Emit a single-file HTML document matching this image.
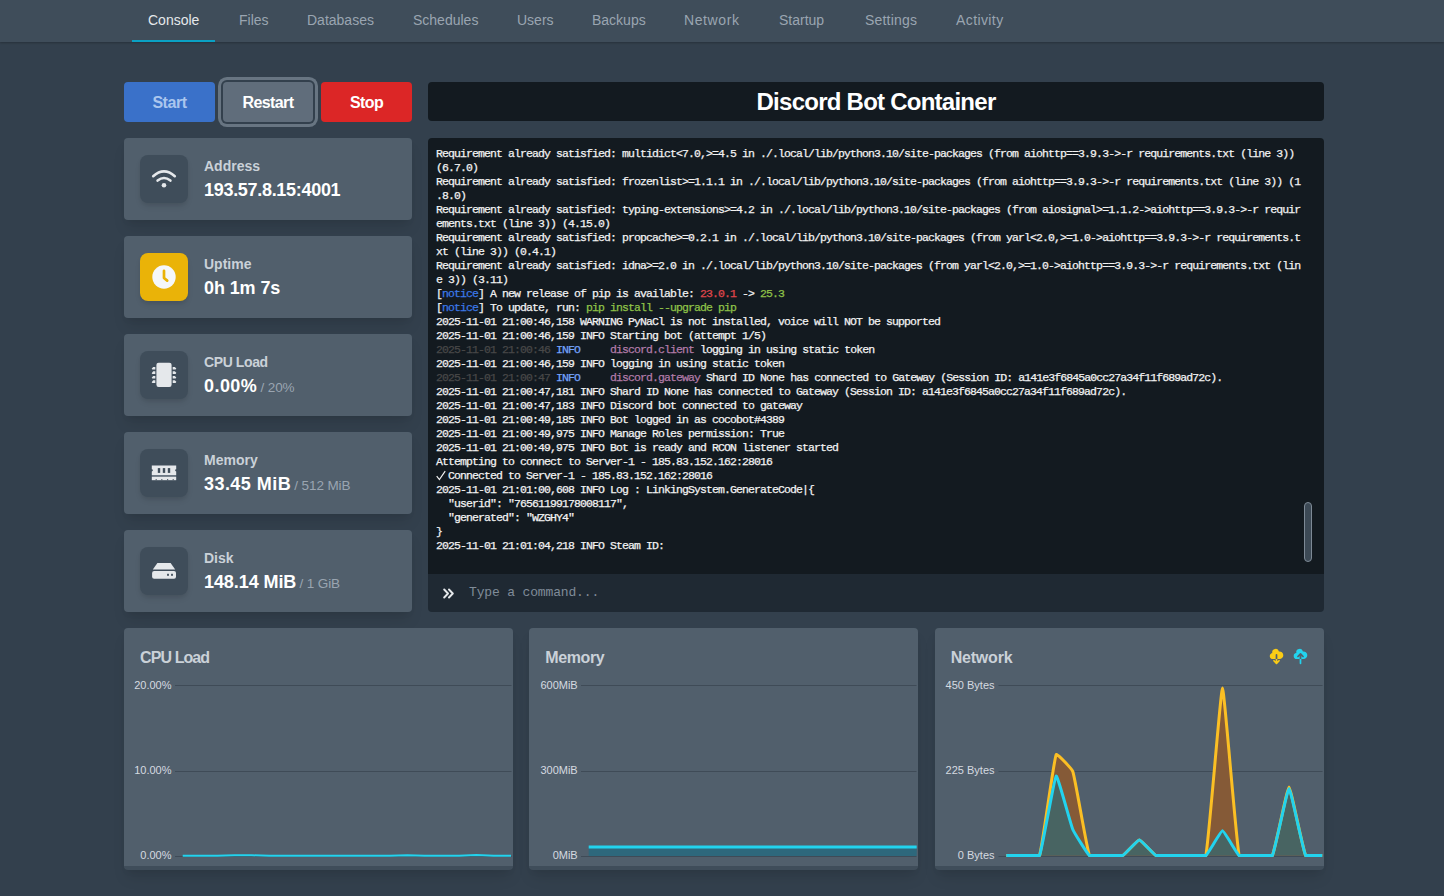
<!DOCTYPE html>
<html><head><meta charset="utf-8">
<style>
*{box-sizing:border-box;margin:0;padding:0}
html,body{width:1444px;height:896px;overflow:hidden;background:#33404d;font-family:"Liberation Sans",sans-serif}
.abs{position:absolute}
#nav{position:absolute;left:0;top:0;width:1444px;height:42px;background:#3f4d5a;box-shadow:0 1px 2px rgba(0,0,0,.25)}
#nav a{position:absolute;top:12px;font-size:14px;line-height:17px;color:#9aa5b1;text-decoration:none;white-space:nowrap}
#nav a.act{color:#e5e8eb}
#uline{position:absolute;left:132px;top:40px;width:83px;height:2px;background:#0aa1c4}
.btn{position:absolute;top:82px;height:40px;width:91px;border-radius:4px;font-size:16px;font-weight:700;text-align:center;line-height:41px;color:#fff;letter-spacing:-0.6px}
.card{position:absolute;left:124px;width:288px;height:82px;background:#515f6c;border-radius:4px;box-shadow:0 10px 15px -3px rgba(0,0,0,.1),0 4px 6px -2px rgba(0,0,0,.05)}
.ibox{position:absolute;left:16px;top:17px;width:48px;height:48px;border-radius:8px;background:#3f4d5a;box-shadow:0 4px 6px -1px rgba(0,0,0,.1),0 2px 4px -1px rgba(0,0,0,.06)}
.ibox svg{position:absolute;left:0;top:0}
.lbl{position:absolute;left:80px;top:19.5px;font-size:14px;font-weight:700;color:#cad1d8;white-space:nowrap;line-height:17px}
.val{position:absolute;left:80px;top:41px;letter-spacing:-0.3px;font-size:18px;font-weight:700;color:#fff;white-space:nowrap;line-height:22px}
.val small{font-size:13.5px;font-weight:400;color:#9aa5b1;letter-spacing:-0.1px;margin-left:-1.5px}
#title{position:absolute;left:428px;top:82px;width:896px;height:39px;background:#131a20;border-radius:4px;color:#fff;font-size:24px;font-weight:700;text-align:center;line-height:39px;letter-spacing:-0.75px}
#con{position:absolute;left:428px;top:138px;width:896px;height:436px;background:#131a20;border-radius:4px 4px 0 0}
#out{position:absolute;left:8px;top:9px;font-family:"Liberation Mono",monospace;font-size:11.5px;line-height:14px;letter-spacing:-0.9px;color:#f2f2f2;white-space:pre;-webkit-text-stroke:0.25px currentColor}
.cB{color:#3b78e7}.cR{color:#e0474c}.cG{color:#8fc348}.cD{color:#484848}.cI{color:#73a3fa}.cM{color:#b27ba8}
#inp{position:absolute;left:428px;top:574px;width:896px;height:38px;background:#1f2933;border-radius:0 0 4px 4px}
.chart{position:absolute;top:628px;width:389px;height:242px;background:#515f6c;border-radius:4px;border-bottom:4px solid #3f4d5a;box-shadow:0 10px 15px -3px rgba(0,0,0,.1),0 4px 6px -2px rgba(0,0,0,.05)}
.ctitle{position:absolute;left:16px;top:21px;font-size:16px;font-weight:700;color:#cad1d8;white-space:nowrap}
.chart svg{position:absolute;left:0;top:0}
</style></head><body>
<div id="nav">
<a class="act" style="left:148px">Console</a>
<a style="left:239px">Files</a>
<a style="left:307px">Databases</a>
<a style="left:413px">Schedules</a>
<a style="left:517px">Users</a>
<a style="left:592px">Backups</a>
<a style="left:684px;letter-spacing:.6px">Network</a>
<a style="left:779px">Startup</a>
<a style="left:865px;letter-spacing:.2px">Settings</a>
<a style="left:956px;letter-spacing:.4px">Activity</a>
<div id="uline"></div>
</div>

<div class="btn" style="left:124px;background:#3a71c9;color:#aac6ee;letter-spacing:-0.45px">Start</div>
<div class="btn" style="left:222.67px;width:90.67px;background:#606d7b;box-shadow:0 0 0 2px #33404d,0 0 0 5px #687582">Restart</div>
<div class="btn" style="left:321px;background:#dc2626">Stop</div>

<div class="card" style="top:138px"><div class="ibox"><svg width="48" height="48" viewBox="0 0 48 48"><path d="M13.2 21.2 Q24 11.6 34.8 21.2" fill="none" stroke="#e5e8eb" stroke-width="2.6" stroke-linecap="round"/><path d="M17.6 25.6 Q24 20.4 30.4 25.6" fill="none" stroke="#e5e8eb" stroke-width="2.6" stroke-linecap="round"/><circle cx="24" cy="30.2" r="2.3" fill="#e5e8eb"/></svg></div><div class="lbl">Address</div><div class="val">193.57.8.15:4001</div></div>
<div class="card" style="top:236px"><div class="ibox" style="background:#eab308"><svg width="48" height="48" viewBox="0 0 48 48"><circle cx="24" cy="24" r="11.7" fill="#f5f7fa"/><path d="M24 17.8 V25 L27.2 27.6" fill="none" stroke="#eab308" stroke-width="2.7" stroke-linecap="round" stroke-linejoin="round"/></svg></div><div class="lbl">Uptime</div><div class="val" style="letter-spacing:-0.1px">0h 1m 7s</div></div>
<div class="card" style="top:334px"><div class="ibox"><svg width="48" height="48" viewBox="0 0 48 48"><rect x="16.4" y="11.8" width="15.2" height="24.2" rx="2.2" fill="#e5e8eb"/><path d="M15.3 15.90 V18.50 H12.4 L11.7 17.80 L13.2 15.90z" fill="#e5e8eb"/><path d="M32.7 15.90 V18.50 H35.6 L36.3 17.40 L34.8 15.90z" fill="#e5e8eb"/><path d="M15.3 20.30 V22.90 H12.4 L11.7 22.20 L13.2 20.30z" fill="#e5e8eb"/><path d="M32.7 20.30 V22.90 H35.6 L36.3 21.80 L34.8 20.30z" fill="#e5e8eb"/><path d="M15.3 24.90 V27.50 H12.4 L11.7 26.80 L13.2 24.90z" fill="#e5e8eb"/><path d="M32.7 24.90 V27.50 H35.6 L36.3 26.40 L34.8 24.90z" fill="#e5e8eb"/><path d="M15.3 29.30 V31.90 H12.4 L11.7 31.20 L13.2 29.30z" fill="#e5e8eb"/><path d="M32.7 29.30 V31.90 H35.6 L36.3 30.80 L34.8 29.30z" fill="#e5e8eb"/></svg></div><div class="lbl" style="letter-spacing:-0.4px">CPU Load</div><div class="val"><span style="letter-spacing:0.45px">0.00%</span> <small>/ 20%</small></div></div>
<div class="card" style="top:432px"><div class="ibox"><svg width="48" height="48" viewBox="0 0 48 48"><path d="M11.8 16.4 H36.2 V20.2 a1 1 0 0 0 0 2.2 V26 H11.8 V22.4 a1 1 0 0 0 0 -2.2z" fill="#e5e8eb"/><rect x="17.8" y="19.1" width="2.4" height="4.8" fill="#3f4d5a"/><rect x="22.8" y="19.1" width="2.4" height="4.8" fill="#3f4d5a"/><rect x="27.8" y="19.1" width="2.4" height="4.8" fill="#3f4d5a"/><rect x="11.8" y="26" width="24.4" height="1.8" fill="#6b7784"/><path d="M11.8 27.8 H36.2 V31.2 H11.8z" fill="#e5e8eb"/><rect x="15.6" y="30.2" width="1.2" height="1" fill="#3f4d5a"/><rect x="21.2" y="30.2" width="1.2" height="1" fill="#3f4d5a"/><rect x="27" y="30.2" width="1.2" height="1" fill="#3f4d5a"/><rect x="32.6" y="30.2" width="1.2" height="1" fill="#3f4d5a"/></svg></div><div class="lbl">Memory</div><div class="val"><span style="letter-spacing:0.45px">33.45 MiB</span> <small>/ 512 MiB</small></div></div>
<div class="card" style="top:530px"><div class="ibox"><svg width="48" height="48" viewBox="0 0 48 48"><path d="M17.4 16.1 H30.6 L35.2 22.6 H12.8z" fill="#e5e8eb"/><rect x="12.1" y="24.1" width="23.9" height="7.7" rx="2" fill="#e5e8eb"/><rect x="27" y="26.8" width="2" height="2" rx=".4" fill="#3f4d5a"/><rect x="31" y="26.8" width="2" height="2" rx=".4" fill="#3f4d5a"/></svg></div><div class="lbl">Disk</div><div class="val"><span style="letter-spacing:-0.08px">148.14 MiB</span> <small>/ 1 GiB</small></div></div>

<div id="title">Discord Bot Container</div>
<div id="con"><div id="out">Requirement already satisfied: multidict&lt;7.0,&gt;=4.5 in ./.local/lib/python3.10/site-packages (from aiohttp==3.9.3-&gt;-r requirements.txt (line 3))
(6.7.0)
Requirement already satisfied: frozenlist&gt;=1.1.1 in ./.local/lib/python3.10/site-packages (from aiohttp==3.9.3-&gt;-r requirements.txt (line 3)) (1
.8.0)
Requirement already satisfied: typing-extensions&gt;=4.2 in ./.local/lib/python3.10/site-packages (from aiosignal&gt;=1.1.2-&gt;aiohttp==3.9.3-&gt;-r requir
ements.txt (line 3)) (4.15.0)
Requirement already satisfied: propcache&gt;=0.2.1 in ./.local/lib/python3.10/site-packages (from yarl&lt;2.0,&gt;=1.0-&gt;aiohttp==3.9.3-&gt;-r requirements.t
xt (line 3)) (0.4.1)
Requirement already satisfied: idna&gt;=2.0 in ./.local/lib/python3.10/site-packages (from yarl&lt;2.0,&gt;=1.0-&gt;aiohttp==3.9.3-&gt;-r requirements.txt (lin
e 3)) (3.11)
[<span class="cB">notice</span>] A new release of pip is available: <span class="cR">23.0.1</span> -&gt; <span class="cG">25.3</span>
[<span class="cB">notice</span>] To update, run: <span class="cG">pip install --upgrade pip</span>
2025-11-01 21:00:46,158 WARNING PyNaCl is not installed, voice will NOT be supported
2025-11-01 21:00:46,159 INFO Starting bot (attempt 1/5)
<span class="cD">2025-11-01 21:00:46</span> <span class="cI">INFO</span>     <span class="cM">discord.client</span> logging in using static token
2025-11-01 21:00:46,159 INFO logging in using static token
<span class="cD">2025-11-01 21:00:47</span> <span class="cI">INFO</span>     <span class="cM">discord.gateway</span> Shard ID None has connected to Gateway (Session ID: a141e3f6845a0cc27a34f11f689ad72c).
2025-11-01 21:00:47,181 INFO Shard ID None has connected to Gateway (Session ID: a141e3f6845a0cc27a34f11f689ad72c).
2025-11-01 21:00:47,183 INFO Discord bot connected to gateway
2025-11-01 21:00:49,185 INFO Bot logged in as cocobot#4389
2025-11-01 21:00:49,975 INFO Manage Roles permission: True
2025-11-01 21:00:49,975 INFO Bot is ready and RCON listener started
Attempting to connect to Server-1 - 185.83.152.162:28016
<span style="display:inline-block;width:6px;height:10px;position:relative"><svg style="position:absolute;left:0;top:0.5px" width="11" height="11" viewBox="0 0 11 11"><path d="M0.7 6.2 L3.4 9.6 L9.2 1.2" fill="none" stroke="#f2f2f2" stroke-width="1.2"/></svg></span> Connected to Server-1 - 185.83.152.162:28016
2025-11-01 21:01:00,608 INFO Log : LinkingSystem.GenerateCode|{
  "userid": "76561199178008117",
  "generated": "WZGHY4"
}
2025-11-01 21:01:04,218 INFO Steam ID:</div></div>
<div style="position:absolute;left:1303.8px;top:501.8px;width:8.2px;height:60px;border-radius:4px;background:#3c4955;border:1px solid #7d8995"></div>
<div id="inp"><svg style="position:absolute;left:15px;top:13.5px" width="12" height="12" viewBox="0 0 12 12"><path d="M1.2 1.5 L5 5.5 L1.2 9.5 M6 1.5 L9.8 5.5 L6 9.5" fill="none" stroke="#e5e8eb" stroke-width="1.9" stroke-linecap="round" stroke-linejoin="round"/></svg><div style="position:absolute;left:41px;top:11px;font-family:'Liberation Mono',monospace;font-size:13px;line-height:16px;color:#808c99;letter-spacing:-0.15px;white-space:pre">Type a command...</div></div>

<div class="chart" style="left:124px"><div class="ctitle" style="letter-spacing:-0.9px">CPU Load</div><svg width="389" height="238" viewBox="0 0 389 238"><line x1="51" y1="57.5" x2="387.5" y2="57.5" stroke="#3f4b57" stroke-width="1"/><line x1="51" y1="143.5" x2="387.5" y2="143.5" stroke="#3f4b57" stroke-width="1"/><line x1="51" y1="228.5" x2="387.5" y2="228.5" stroke="#3f4b57" stroke-width="1"/><text x="47.5" y="60.5" text-anchor="end" font-family="Liberation Sans" font-size="11" fill="#d5dae0">20.00%</text><text x="47.5" y="146" text-anchor="end" font-family="Liberation Sans" font-size="11" fill="#d5dae0">10.00%</text><text x="47.5" y="231" text-anchor="end" font-family="Liberation Sans" font-size="11" fill="#d5dae0">0.00%</text><path d="M58.7 227.8 L76.0 227.8 L93.3 227.8 L110.5 227.3 L127.8 227.3 L145.1 227.8 L162.4 227.8 L179.7 227.8 L196.9 227.8 L214.2 227.8 L231.5 227.8 L248.8 227.8 L266.0 227.8 L283.3 227.2 L300.6 227.8 L317.9 227.8 L335.2 227.8 L352.4 226.9 L369.7 227.8 L387.0 227.8" fill="none" stroke="#22d3ee" stroke-width="2"/></svg></div>
<div class="chart" style="left:529.33px"><div class="ctitle" style="letter-spacing:-0.4px">Memory</div><svg width="389" height="238" viewBox="0 0 389 238"><line x1="52" y1="57.5" x2="387.5" y2="57.5" stroke="#3f4b57" stroke-width="1"/><line x1="52" y1="143.5" x2="387.5" y2="143.5" stroke="#3f4b57" stroke-width="1"/><line x1="52" y1="228.5" x2="387.5" y2="228.5" stroke="#3f4b57" stroke-width="1"/><text x="48.7" y="60.5" text-anchor="end" font-family="Liberation Sans" font-size="11" fill="#d5dae0">600MiB</text><text x="48.7" y="146" text-anchor="end" font-family="Liberation Sans" font-size="11" fill="#d5dae0">300MiB</text><text x="48.7" y="231" text-anchor="end" font-family="Liberation Sans" font-size="11" fill="#d5dae0">0MiB</text><rect x="59.7" y="219" width="328" height="9" fill="#2e687c"/><path d="M59.7 219 H387.7" stroke="#22d3ee" stroke-width="3.2"/></svg></div>
<div class="chart" style="left:934.67px"><div class="ctitle" style="letter-spacing:-0.2px">Network</div><svg width="389" height="238" viewBox="0 0 389 238"><line x1="63.5" y1="57.5" x2="387.5" y2="57.5" stroke="#3f4b57" stroke-width="1"/><line x1="63.5" y1="143.5" x2="387.5" y2="143.5" stroke="#3f4b57" stroke-width="1"/><line x1="63.5" y1="228.5" x2="387.5" y2="228.5" stroke="#3f4b57" stroke-width="1"/><text x="59.5" y="60.5" text-anchor="end" font-family="Liberation Sans" font-size="11" fill="#d5dae0">450 Bytes</text><text x="59.5" y="146" text-anchor="end" font-family="Liberation Sans" font-size="11" fill="#d5dae0">225 Bytes</text><text x="59.5" y="231" text-anchor="end" font-family="Liberation Sans" font-size="11" fill="#d5dae0">0 Bytes</text><path d="M71.30 227.50 C72.96 227.50 86.27 227.50 87.93 227.50 C89.59 227.50 104.10 227.50 104.56 227.50 C107.42 218.81 118.49 133.32 121.19 126.50 C121.82 124.92 137.10 141.30 137.82 143.50 C140.42 151.40 151.66 220.47 154.45 227.50 C154.99 227.50 169.42 227.50 171.08 227.50 C172.74 227.50 186.30 227.50 187.71 227.50 C189.63 226.60 202.68 212.00 204.34 212.00 C206.00 212.00 219.05 226.60 220.97 227.50 C222.38 227.50 235.94 227.50 237.60 227.50 C239.26 227.50 252.57 227.50 254.23 227.50 C255.89 227.50 270.56 227.50 270.86 227.50 C273.89 212.26 285.83 60.00 287.49 60.00 C289.15 60.00 301.09 212.26 304.12 227.50 C304.42 227.50 319.09 227.50 320.75 227.50 C322.41 227.50 336.75 227.50 337.38 227.50 C340.07 221.96 352.35 159.00 354.01 159.00 C355.67 159.00 367.95 221.96 370.64 227.50 C371.27 227.50 385.61 227.50 387.27 227.50 L387.3 227.5 L71.3 227.5Z" fill="#855a37"/><path d="M71.30 227.50 C72.96 227.50 86.27 227.50 87.93 227.50 C89.59 227.50 103.99 227.50 104.56 227.50 C107.32 220.90 119.22 149.54 121.19 148.00 C122.55 146.94 135.68 196.37 137.82 201.50 C139.00 204.32 152.29 225.81 154.45 227.50 C155.61 227.50 169.42 227.50 171.08 227.50 C172.74 227.50 186.30 227.50 187.71 227.50 C189.63 226.60 202.68 212.00 204.34 212.00 C206.00 212.00 219.05 226.60 220.97 227.50 C222.38 227.50 235.94 227.50 237.60 227.50 C239.26 227.50 252.57 227.50 254.23 227.50 C255.89 227.50 269.67 227.50 270.86 227.50 C272.99 225.92 285.83 202.80 287.49 202.80 C289.15 202.80 301.99 225.92 304.12 227.50 C305.31 227.50 319.09 227.50 320.75 227.50 C322.41 227.50 336.73 227.50 337.38 227.50 C340.06 222.10 352.35 160.50 354.01 160.50 C355.67 160.50 367.96 222.10 370.64 227.50 C371.29 227.50 385.61 227.50 387.27 227.50 L387.3 227.5 L71.3 227.5Z" fill="#486462"/><path d="M71.30 227.50 C72.96 227.50 86.27 227.50 87.93 227.50 C89.59 227.50 104.10 227.50 104.56 227.50 C107.42 218.81 118.49 133.32 121.19 126.50 C121.82 124.92 137.10 141.30 137.82 143.50 C140.42 151.40 151.66 220.47 154.45 227.50 C154.99 227.50 169.42 227.50 171.08 227.50 C172.74 227.50 186.30 227.50 187.71 227.50 C189.63 226.60 202.68 212.00 204.34 212.00 C206.00 212.00 219.05 226.60 220.97 227.50 C222.38 227.50 235.94 227.50 237.60 227.50 C239.26 227.50 252.57 227.50 254.23 227.50 C255.89 227.50 270.56 227.50 270.86 227.50 C273.89 212.26 285.83 60.00 287.49 60.00 C289.15 60.00 301.09 212.26 304.12 227.50 C304.42 227.50 319.09 227.50 320.75 227.50 C322.41 227.50 336.75 227.50 337.38 227.50 C340.07 221.96 352.35 159.00 354.01 159.00 C355.67 159.00 367.95 221.96 370.64 227.50 C371.27 227.50 385.61 227.50 387.27 227.50" fill="none" stroke="#fbbf24" stroke-width="3" stroke-linejoin="round"/><path d="M71.30 227.50 C72.96 227.50 86.27 227.50 87.93 227.50 C89.59 227.50 103.99 227.50 104.56 227.50 C107.32 220.90 119.22 149.54 121.19 148.00 C122.55 146.94 135.68 196.37 137.82 201.50 C139.00 204.32 152.29 225.81 154.45 227.50 C155.61 227.50 169.42 227.50 171.08 227.50 C172.74 227.50 186.30 227.50 187.71 227.50 C189.63 226.60 202.68 212.00 204.34 212.00 C206.00 212.00 219.05 226.60 220.97 227.50 C222.38 227.50 235.94 227.50 237.60 227.50 C239.26 227.50 252.57 227.50 254.23 227.50 C255.89 227.50 269.67 227.50 270.86 227.50 C272.99 225.92 285.83 202.80 287.49 202.80 C289.15 202.80 301.99 225.92 304.12 227.50 C305.31 227.50 319.09 227.50 320.75 227.50 C322.41 227.50 336.73 227.50 337.38 227.50 C340.06 222.10 352.35 160.50 354.01 160.50 C355.67 160.50 367.96 222.10 370.64 227.50 C371.29 227.50 385.61 227.50 387.27 227.50" fill="none" stroke="#22d3ee" stroke-width="3" stroke-linejoin="round"/></svg><svg style="position:absolute;left:333.2px;top:19.5px" width="17" height="17" viewBox="0 0 20 20"><path fill="#facc15" fill-rule="evenodd" d="M2 9.5A3.5 3.5 0 005.5 13H9v2.586l-1.293-1.293a1 1 0 00-1.414 1.414l3 3a1 1 0 001.414 0l3-3a1 1 0 00-1.414-1.414L11 15.586V13h2.5a4.5 4.5 0 10-.616-8.958 4.002 4.002 0 10-7.753 1.977A3.5 3.5 0 002 9.5zm9 3.5H9V8a1 1 0 012 0v5z" clip-rule="evenodd"/></svg><svg style="position:absolute;left:357.2px;top:19.5px" width="17" height="17" viewBox="0 0 20 20"><path fill="#22d3ee" d="M5.5 13a3.5 3.5 0 01-.369-6.98 4 4 0 117.753-1.977A4.5 4.5 0 1113.5 13H11V9.413l1.293 1.293a1 1 0 001.414-1.414l-3-3a1 1 0 00-1.414 0l-3 3a1 1 0 001.414 1.414L9 9.414V13H5.5z"/><path fill="#22d3ee" d="M9 13h2v5a1 1 0 11-2 0v-5z"/></svg></div>
</body></html>
